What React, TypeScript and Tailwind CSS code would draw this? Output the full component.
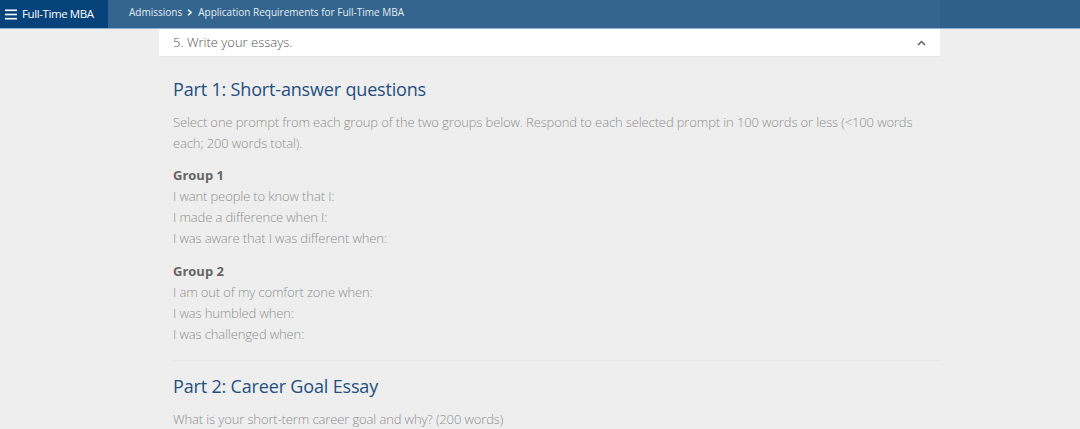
import React from "react";

export default function App() {
  const font = { fontFamily: '"Open Sans", "Liberation Sans", sans-serif' };
  return (
    <div className="w-[1080px] h-[429px] overflow-hidden bg-[#eeeeee]" style={font}>
      <div className="flex h-[29px] bg-[#33658f] border-b border-[#8fb0cc]">
        <div className="flex items-center w-[108px] bg-[#05437a] pl-[5px] gap-[5px] shrink-0">
          <svg width="12" height="11" viewBox="0 0 12 11" className="shrink-0">
            <rect x="0" y="0.5" width="12" height="1.6" fill="#fff" />
            <rect x="0" y="4.7" width="12" height="1.6" fill="#fff" />
            <rect x="0" y="8.9" width="12" height="1.6" fill="#fff" />
          </svg>
          <span className="text-white text-[11.5px] font-medium tracking-[-0.4px]">Full-Time MBA</span>
        </div>
        <div className="flex items-center flex-1 pl-[21px] text-[10px] text-[#e4ecf3] gap-[5px] pb-[3px]">
          <span>Admissions</span>
          <svg width="6" height="7" viewBox="0 0 6 7">
            <path d="M1 0.8 L4.2 3.5 L1 6.2" stroke="#fff" strokeWidth="1.5" fill="none" />
          </svg>
          <span>Application Requirements for Full-Time MBA</span>
        </div>
        <div className="w-[140px] bg-[#2f6089]" />
      </div>
      <div className="ml-[159px] w-[781px]">
        <div className="flex items-center justify-between h-[28px] bg-white pl-[14px] pr-[14px] text-[13px] font-light text-[#555555] border-b border-[#e6e6e6]">
          <span>5. Write your essays.</span>
          <svg width="9" height="6" viewBox="0 0 9 6">
            <path d="M1 5 L4.5 1.5 L8 5" stroke="#555" strokeWidth="1.4" fill="none" />
          </svg>
        </div>
        <div className="pl-[14px] pr-[10px] pt-[19px]">
          <h2 className="text-[18px] leading-[26px] tracking-[-0.17px] text-[#1f4f7f]">Part 1: Short-answer questions</h2>
          <p className="mt-[10px] text-[13px] leading-[21px] tracking-[-0.12px] font-light text-[#8f8f8f]">
            Select one prompt from each group of the two groups below. Respond to each selected prompt in 100 words or less (&lt;100 words each; 200 words total).
          </p>
          <div className="mt-[11px] text-[13px] leading-[21px] tracking-[-0.12px] font-light text-[#8f8f8f]">
            <div className="font-bold text-[#666666] tracking-normal">Group 1</div>
            <div>I want people to know that I:</div>
            <div>I made a difference when I:</div>
            <div>I was aware that I was different when:</div>
          </div>
          <div className="mt-[12px] text-[13px] leading-[21px] tracking-[-0.12px] font-light text-[#8f8f8f]">
            <div className="font-bold text-[#666666] tracking-normal">Group 2</div>
            <div>I am out of my comfort zone when:</div>
            <div>I was humbled when:</div>
            <div>I was challenged when:</div>
          </div>
        </div>
        <div className="ml-[14px] mt-[15px] border-t border-[#e7e7e7]" />
        <div className="pl-[14px] pt-[12px]">
          <h2 className="text-[18px] leading-[26px] tracking-[-0.17px] text-[#1f4f7f]">Part 2: Career Goal Essay</h2>
          <p className="mt-[10px] text-[13px] leading-[21px] tracking-[-0.12px] font-light text-[#8f8f8f]">What is your short-term career goal and why? (200 words)</p>
        </div>
      </div>
    </div>
  );
}
